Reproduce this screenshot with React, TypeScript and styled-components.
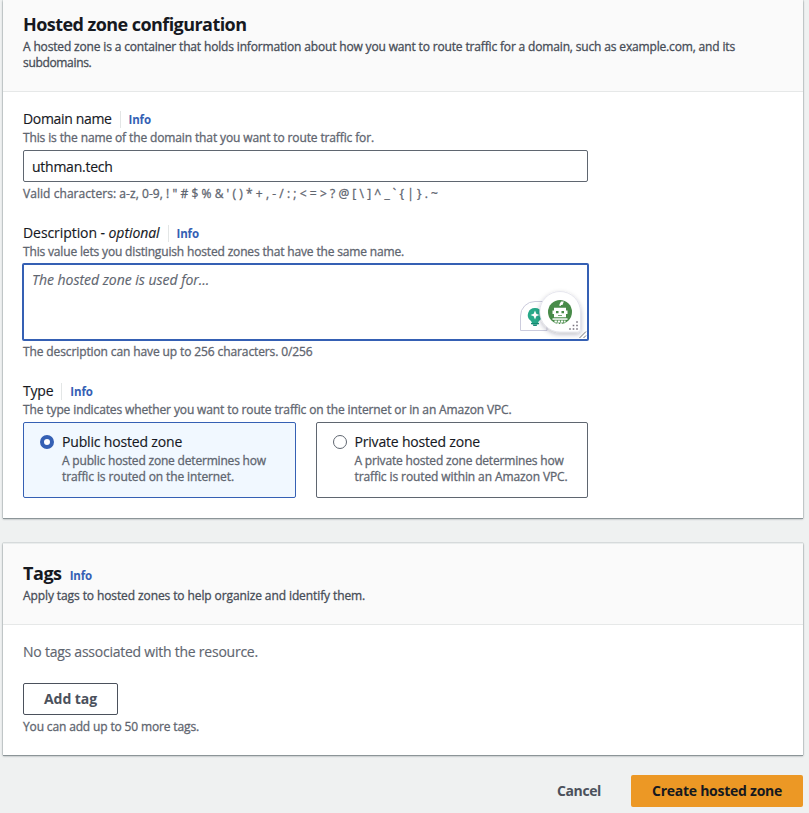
import React from "react";
import styled, { createGlobalStyle, css } from "styled-components";

const GlobalStyle = createGlobalStyle`
  * { box-sizing: border-box; }
  body {
    margin: 0;
    background: #eff1f1;
    color: #16191f;
    font: 400 14px/22px "Open Sans", "Noto Sans", sans-serif;
    overflow: hidden;
  }
  h2, p { margin: 0; }
`;

const Page = styled.main`
  width: 809px;
  height: 813px;
  padding: 0 6px 0 3px;
  overflow: hidden;
`;

const Card = styled.section<{ $height: number }>`
  height: ${(p) => p.$height}px;
  background: #fff;
  box-shadow: 0 1px 0 0 #8c9598, 0 1px 2px 0 rgba(0, 28, 36, 0.4),
    0 0 1px 0 rgba(0, 28, 36, 0.45);
  & + & {
    margin-top: 25px;
    border-top: 1px solid #eaeded;
  }
`;

const CardHeader = styled.header<{ $height: number; $top: number }>`
  height: ${(p) => p.$height}px;
  padding: ${(p) => p.$top}px 20px 0;
  background: #fafafa;
  border-bottom: 1px solid #e6e8e8;
`;

const CardBody = styled.div`
  padding: 16px 20px 0;
`;

const TitleRow = styled.div`
  display: flex;
  align-items: baseline;
  gap: 8px;
  height: 22px;
  margin-bottom: 4px;
`;

const Title = styled.h2<{ $track: number }>`
  font-size: 18px;
  line-height: 22px;
  font-weight: 700;
  letter-spacing: ${(p) => p.$track}px;
`;

const Text = styled.span<{ $track?: number }>`
  letter-spacing: ${(p) => p.$track ?? 0}px;
  white-space: nowrap;
  -webkit-text-stroke: 0.15px currentColor;
`;

const Hint = styled.p<{ $track: number; $dark?: boolean }>`
  position: relative;
  font-size: 12px;
  line-height: 16px;
  font-weight: 500;
  color: ${(p) => (p.$dark ? "#474d57" : "#5f6670")};
  letter-spacing: ${(p) => p.$track}px;
  white-space: nowrap;
  -webkit-text-stroke: 0.3px currentColor;
`;

const Info = styled.a`
  color: #3560b4;
  font-size: 11.5px;
  font-weight: 700;
  letter-spacing: -0.15px;
  line-height: 18px;
`;

const Field = styled.div<{ $gap?: number }>`
  margin-top: ${(p) => p.$gap ?? 0}px;
  width: 565px;
`;

const LabelRow = styled.div`
  display: flex;
  align-items: center;
  height: 22px;
`;

const Divider = styled.i`
  width: 1px;
  height: 17px;
  margin: 0 8px;
  background: #e3e6e6;
`;

const LabelInfo = styled(Info)`
  padding-top: 2px;
`;

const control = css`
  display: block;
  background: #fff;
  color: #16191f;
  font-family: inherit;
  font-size: 14px;
  line-height: 22px;
  border-radius: 2px;
  outline: none;
  -webkit-text-stroke: 0.15px currentColor;
`;

const Input = styled.input`
  ${control}
  width: 565px;
  height: 32px;
  margin: 4px 0;
  padding: 1px 8px 0;
  border: 1px solid #5f6670;
  letter-spacing: -0.25px;
`;

const AreaWrap = styled.div`
  position: relative;
  margin: 3px -1px;
`;

const TextArea = styled.textarea`
  ${control}
  width: 567px;
  height: 78px;
  padding: 4px 8px;
  border: 2px solid #3560b4;
  resize: none;
  letter-spacing: -0.025px;
  &::placeholder {
    color: #5f6670;
    font-style: italic;
    opacity: 1;
  }
`;

const AssistantOverlay = styled.svg`
  position: absolute;
  left: 490px;
  top: 21px;
`;

const Tiles = styled.div`
  display: flex;
  gap: 20px;
  margin-top: 4px;
`;

const Tile = styled.label<{ $selected?: boolean; $width: number }>`
  display: flex;
  gap: ${(p) => (p.$selected ? 8 : 7.5)}px;
  width: ${(p) => p.$width}px;
  height: 76px;
  padding: 8px 0 0 16px;
  border: 1px solid ${(p) => (p.$selected ? "#3560b4" : "#5f6670")};
  border-radius: 2px;
  background: ${(p) => (p.$selected ? "#f1f8ff" : "#fff")};
`;

const Radio = styled.span<{ $selected?: boolean }>`
  flex: none;
  width: 14px;
  height: 14px;
  margin-top: 4px;
  border-radius: 50%;
  background: #fff;
  border: ${(p) => (p.$selected ? "4px solid #3560b4" : "1px solid #5f6670")};
`;

const TileText = styled.div`
  display: flex;
  flex-direction: column;
`;

const Button = styled.button<{ $kind: "normal" | "link" | "primary"; $width: number; $track: number }>`
  width: ${(p) => p.$width}px;
  height: 32px;
  padding: 0;
  border: 1px solid transparent;
  border-radius: 2px;
  background: transparent;
  color: #4b515c;
  font: 700 14px/20px "Open Sans", "Noto Sans", sans-serif;
  letter-spacing: ${(p) => p.$track}px;
  ${(p) => p.$kind === "normal" && css`background: #fff; border-color: #4b515c;`}
  ${(p) => p.$kind === "primary" && css`background: #ec9825; color: #16191f;`}
`;

const TagAction = styled.div`
  display: flex;
  flex-direction: column;
  gap: 4px;
  margin-top: 20px;
`;

const EmptyText = styled.p`
  color: #5f6670;
  letter-spacing: -0.24px;
  -webkit-text-stroke: 0.15px currentColor;
`;

const Actions = styled.footer`
  display: flex;
  justify-content: flex-end;
  gap: 8px;
  margin-top: 20px;
`;

function Assistant() {
  return (
    <AssistantOverlay width="76" height="58" viewBox="512 284 76 58">
      <defs>
        <filter id="lift" x="-30%" y="-30%" width="160%" height="170%">
          <feDropShadow dx="0" dy="2" stdDeviation="2.5" floodColor="#222238" floodOpacity="0.28" />
        </filter>
      </defs>
      <path d="M520.5 330.500V316a14.500 14.500 0 0 1 14.500-14.500h12v29Z" fill="#fff" stroke="#ccccdd" />
      <path d="M535 308a7 7 0 0 0-4.500 12.500c1 .9 1.200 1.500 1.300 2.500h6.400c.1-1 .3-1.600 1.300-2.500A7 7 0 0 0 535 308Z" fill="#27a989" />
      <path d="m535 310.500 1.300 3.200 3.200 1.300-3.200 1.300-1.300 3.200-1.300-3.200-3.200-1.300 3.200-1.300Z" fill="#fff" />
      <path d="M531 323h8v1.300h-8Zm1.500 1.500h5l-1 1.500h-3Z" fill="#158a73" />
      <path d="M560 291.500a20.500 20.500 0 0 1 20.500 20.500v17a3 3 0 0 1-3 3H560a20.250 20.250 0 0 1 0-40.500Z" fill="#fff" stroke="#dedee8" strokeWidth=".7" filter="url(#lift)" />
      <circle cx="560" cy="312" r="12" fill="#488b49" />
      <path d="M559.500 306v-1.800l1.500-2.700h2.800l-1.300 3.500h-1.700v1" fill="#fff" />
      <path d="M554 307.700h12v2.800h1.500v3.500H566v3.300h-12V314h-1.500v-3.500h1.500Z" fill="#fff" />
      <path d="M556 311h2.500v2.200H556ZM561.500 311h2.500v2.200h-2.500ZM558 315h4v.8h-4Z" fill="#488b49" />
      <path d="M552.500 318.300h15v1.500h-15Z" fill="#fff" />
      <path d="M554.500 321.500h11" stroke="#fff" strokeWidth="2" strokeDasharray="2.400 .8" />
      <path d="M557 323.200h6" stroke="#fff" strokeWidth="1" strokeDasharray="2 1" />
      <path d="M576.200 321.200h1.600v1.600h-1.600ZM572.700 324.700h1.600v1.600h-1.600ZM576.200 324.700h1.600v1.600h-1.600ZM569.200 328.200h1.600v1.600h-1.600ZM572.700 328.200h1.600v1.600h-1.600ZM576.200 328.200h1.600v1.600h-1.600Z" fill="#77727d" />
      <path d="m579.500 338 6.500-6.500M583.500 338l2.500-2.500" stroke="#65656b" strokeWidth=".9" />
    </AssistantOverlay>
  );
}

export default function App() {
  return (
    <>
      <GlobalStyle />
      <Page>
        <Card $height={518}>
          <CardHeader $height={92} $top={13}>
            <TitleRow><Title $track={-0.56}>Hosted zone configuration</Title></TitleRow>
            <Hint $dark $track={-0.158}>
              A hosted zone is a container that holds information about how you want to route traffic for a domain, such as example.com, and its
            </Hint>
            <Hint $dark $track={-0.33}>subdomains.</Hint>
          </CardHeader>
          <CardBody>
            <Field>
              <LabelRow>
                <Text $track={-0.34}>Domain name</Text><Divider /><LabelInfo>Info</LabelInfo>
              </LabelRow>
              <Hint $track={-0.127}>This is the name of the domain that you want to route traffic for.</Hint>
              <Input defaultValue="uthman.tech" />
              <Hint $track={0.054}>{"Valid characters: a-z, 0-9, ! \" # $ % & ' ( ) * + , - / : ; < = > ? @ [ \\ ] ^ _ ` { | } . ~"}</Hint>
            </Field>
            <Field $gap={20}>
              <LabelRow>
                <Text $track={-0.07}>Description - <em>optional</em></Text><Divider /><LabelInfo>Info</LabelInfo>
              </LabelRow>
              <Hint $track={-0.162}>This value lets you distinguish hosted zones that have the same name.</Hint>
              <AreaWrap>
                <TextArea placeholder="The hosted zone is used for..." />
                <Assistant />
              </AreaWrap>
              <Hint $track={-0.113}>The description can have up to 256 characters. 0/256</Hint>
            </Field>
            <Field $gap={20}>
              <LabelRow>
                <Text $track={-0.2}>Type</Text><Divider /><LabelInfo>Info</LabelInfo>
              </LabelRow>
              <Hint $track={-0.12}>The type indicates whether you want to route traffic on the internet or in an Amazon VPC.</Hint>
              <Tiles>
                <Tile $selected $width={273}>
                  <Radio $selected />
                  <TileText>
                    <Text $track={-0.17}>Public hosted zone</Text>
                    <Hint $track={-0.186}>A public hosted zone determines how</Hint>
                    <Hint $track={-0.11}>traffic is routed on the internet.</Hint>
                  </TileText>
                </Tile>
                <Tile $width={272}>
                  <Radio />
                  <TileText>
                    <Text $track={-0.19}>Private hosted zone</Text>
                    <Hint $track={-0.18}>A private hosted zone determines how</Hint>
                    <Hint $track={-0.1}>traffic is routed within an Amazon VPC.</Hint>
                  </TileText>
                </Tile>
              </Tiles>
            </Field>
          </CardBody>
        </Card>
        <Card $height={212}>
          <CardHeader $height={81} $top={18}>
            <TitleRow><Title $track={-0.45}>Tags</Title><Info>Info</Info></TitleRow>
            <Hint $dark $track={-0.1}>Apply tags to hosted zones to help organize and identify them.</Hint>
          </CardHeader>
          <CardBody>
            <EmptyText>No tags associated with the resource.</EmptyText>
            <TagAction>
              <Button $kind="normal" $width={95} $track={-0.07}>Add tag</Button>
              <Hint $track={-0.145}>You can add up to 50 more tags.</Hint>
            </TagAction>
          </CardBody>
        </Card>
        <Actions>
          <Button $kind="link" $width={88} $track={-0.38}>Cancel</Button>
          <Button $kind="primary" $width={172} $track={-0.255}>Create hosted zone</Button>
        </Actions>
      </Page>
    </>
  );
}
